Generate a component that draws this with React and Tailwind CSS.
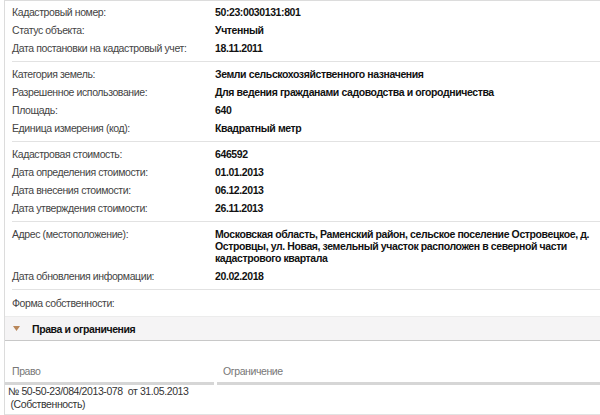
import React from "react";

const groups = [
  [
    ["Кадастровый номер:", "50:23:0030131:801"],
    ["Статус объекта:", "Учтенный"],
    ["Дата постановки на кадастровый учет:", "18.11.2011"],
  ],
  [
    ["Категория земель:", "Земли сельскохозяйственного назначения"],
    ["Разрешенное использование:", "Для ведения гражданами садоводства и огородничества"],
    ["Площадь:", "640"],
    ["Единица измерения (код):", "Квадратный метр"],
  ],
  [
    ["Кадастровая стоимость:", "646592"],
    ["Дата определения стоимости:", "01.01.2013"],
    ["Дата внесения стоимости:", "06.12.2013"],
    ["Дата утверждения стоимости:", "26.11.2013"],
  ],
  [
    [
      "Адрес (местоположение):",
      "Московская область, Раменский район, сельское поселение Островецкое, д. Островцы, ул. Новая, земельный участок расположен в северной части кадастрового квартала",
    ],
    ["Дата обновления информации:", "20.02.2018"],
  ],
];

const Row = ({ label, value }) => (
  <div className="flex py-[3px]">
    <div className="w-[203px] shrink-0 text-[#444]">{label}</div>
    <div className="w-[386px] font-bold text-[#111]">{value}</div>
  </div>
);

const App = () => {
  return (
    <div
      className="w-[600px] h-[415px] overflow-hidden bg-white text-[10.5px] leading-[12px] tracking-[-0.4px]"
      style={{ fontFamily: '"Liberation Sans", Arial, sans-serif' }}
    >
      <div className="ml-[4px] border-l border-t border-[#dcdcdc] h-full">
        <div className="pl-[7px]">
          {groups.map((g, i) => (
            <div
              key={i}
              className={`border-b border-[#e2e2e2] pb-[4px] ${i === 0 ? "pt-[2px]" : "pt-[3px]"}`}
            >
              {g.map(([l, v]) => (
                <Row key={l} label={l} value={v} />
              ))}
            </div>
          ))}
          <div className="py-[7px] text-[#444]">Форма собственности:</div>
        </div>
        <div className="h-[25px] bg-[#f5f4f5] border-t border-[#ececec] border-b border-b-[#c8c8c8] flex items-center pl-[8px]">
          <svg width="7" height="5" viewBox="0 0 7 5" className="mr-[12px]">
            <path d="M0 0 L7 0 L3.5 5 Z" fill="#b9875a" />
          </svg>
          <span className="font-bold text-[#111]">Права и ограничения</span>
        </div>
        <div className="flex pt-[24px] text-[#777]">
          <div className="w-[209px] pl-[7px] pb-[5px] border-b-[3px] border-[#d6d6d6] mr-[3px]">Право</div>
          <div className="flex-1 pl-[6px] pb-[5px] border-b-[3px] border-[#d6d6d6]">Ограничение</div>
        </div>
        <div className="pl-[3px] pb-[3px] border-b border-[#e2e2e2] text-[#333] leading-[13px]">
          <div>№ 50-50-23/084/2013-078&nbsp; от 31.05.2013</div>
          <div>&nbsp;(Собственность)</div>
        </div>
      </div>
    </div>
  );
};

export default App;
